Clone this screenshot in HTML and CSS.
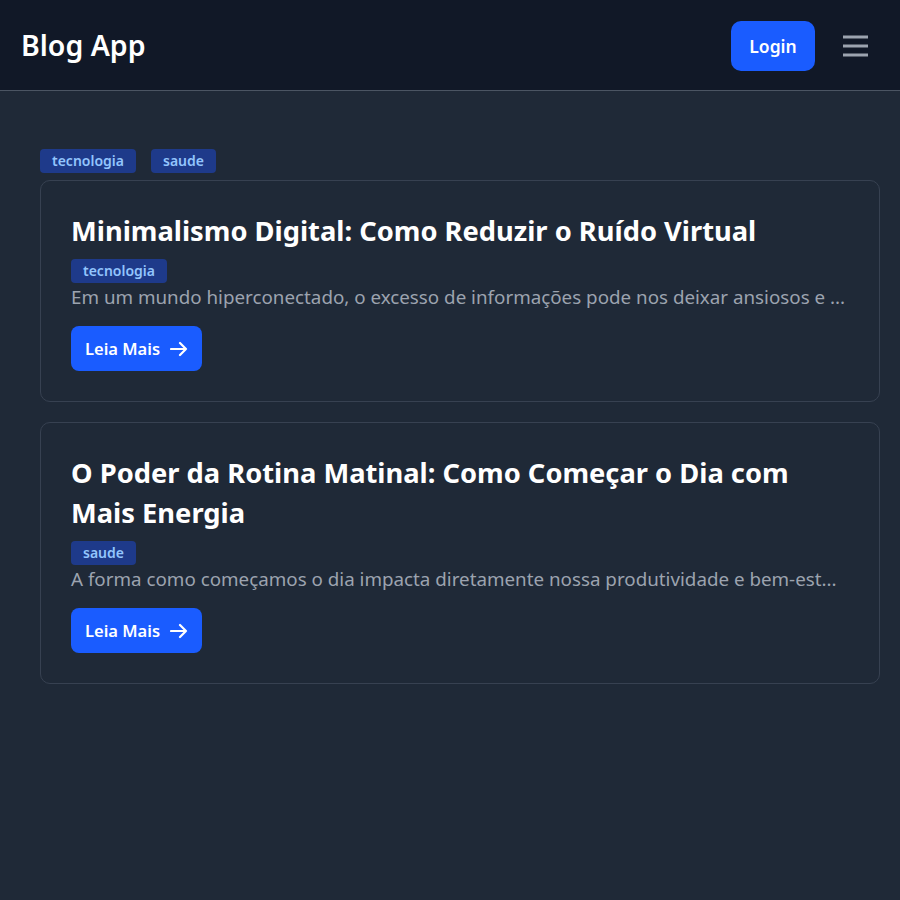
FILE: index.html
```html
<!DOCTYPE html>
<html lang="pt">
<head>
<meta charset="utf-8">
<title>Blog App</title>
<link rel="stylesheet" href="styles.css">
</head>
<body>
<header class="topbar">
  <div class="brand">Blog App</div>
  <div class="actions">
    <button class="login">Login</button>
    <button class="menu" aria-label="menu">
      <svg width="26" height="22" viewBox="0 0 26 22"><g stroke="#9ca3af" stroke-width="3" stroke-linecap="butt"><line x1="0" y1="2" x2="25" y2="2"/><line x1="0" y1="11" x2="25" y2="11"/><line x1="0" y1="20" x2="25" y2="20"/></g></svg>
    </button>
  </div>
</header>
<main class="content">
  <div class="filters">
    <span class="tag">tecnologia</span>
    <span class="tag">saude</span>
  </div>
  <div class="posts">
    <article class="card">
      <h2 class="title">Minimalismo Digital: Como Reduzir o Ruído Virtual</h2>
      <span class="tag">tecnologia</span>
      <p class="excerpt">Em um mundo hiperconectado, o excesso de informações pode nos deixar ansiosos e ...</p>
      <button class="more">Leia Mais <svg width="18" height="16" viewBox="0 0 18 16"><path d="M1 8h15M10 2l6 6-6 6" fill="none" stroke="#fff" stroke-width="2.2" stroke-linecap="round" stroke-linejoin="round"/></svg></button>
    </article>
    <article class="card">
      <h2 class="title">O Poder da Rotina Matinal: Como Começar o Dia com Mais Energia</h2>
      <span class="tag">saude</span>
      <p class="excerpt">A forma como começamos o dia impacta diretamente nossa produtividade e bem-est...</p>
      <button class="more">Leia Mais <svg width="18" height="16" viewBox="0 0 18 16"><path d="M1 8h15M10 2l6 6-6 6" fill="none" stroke="#fff" stroke-width="2.2" stroke-linecap="round" stroke-linejoin="round"/></svg></button>
    </article>
  </div>
</main>
</body>
</html>
```

FILE: styles.css
```css
* { box-sizing: border-box; }
html, body { margin: 0; padding: 0; }
body {
  background: #1f2937;
  font-family: "Noto Sans", "Open Sans", sans-serif;
  color: #fff;
  min-height: 900px;
}
.topbar {
  height: 91px;
  background: #111827;
  border-bottom: 1px solid #4b5563;
  display: flex;
  align-items: center;
  justify-content: space-between;
  padding: 0 31px 0 21px;
}
.brand {
  font-size: 28.5px;
  font-weight: 600;
  color: #fff;
}
.actions {
  display: flex;
  align-items: center;
  gap: 28px;
}
.login {
  background: #1a5cff;
  color: #fff;
  border: 0;
  border-radius: 10px;
  height: 50px;
  width: 84px;
  font-family: inherit;
  font-size: 17.5px;
  font-weight: 600;
  margin-top: 1px;
}
.menu {
  background: none;
  border: 0;
  padding: 0;
  display: flex;
  margin-top: 1px;
}
.content {
  padding: 58px 20px 40px 40px;
}
.filters {
  display: flex;
  gap: 15px;
  margin-bottom: 7px;
}
.tag {
  display: inline-block;
  background: #1e3a8a;
  color: #93c5fd;
  font-size: 14px;
  font-weight: 600;
  line-height: 24px;
  height: 24px;
  padding: 0 12px;
  border-radius: 4px;
}
.posts {
  display: flex;
  flex-direction: column;
  gap: 20px;
}
.card {
  border: 1px solid #374151;
  border-radius: 10px;
  padding: 30px;
  display: flex;
  flex-direction: column;
  align-items: flex-start;
}
.title {
  margin: 0 0 8px;
  font-size: 27.3px;
  line-height: 40px;
  font-weight: 700;
  color: #fff;
}
.excerpt {
  margin: 0 0 15px;
  font-size: 18.8px;
  line-height: 28px;
  color: #9ca3af;
  white-space: nowrap;
}
.more {
  background: #1a5cff;
  color: #fff;
  border: 0;
  border-radius: 8px;
  height: 45px;
  width: 131px;
  font-family: inherit;
  font-size: 16.5px;
  font-weight: 600;
  display: flex;
  align-items: center;
  justify-content: center;
  gap: 10px;
}
```
